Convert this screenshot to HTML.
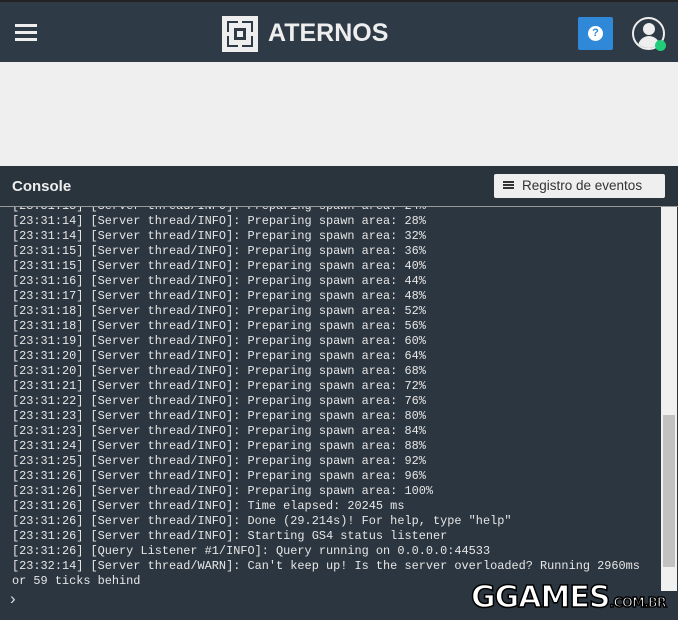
<!DOCTYPE html>
<html><head><style>
*{margin:0;padding:0;box-sizing:border-box}
body{width:678px;height:620px;overflow:hidden;background:#efefef;font-family:"Liberation Sans",sans-serif;position:relative}
.hdr{position:absolute;left:0;top:0;width:678px;height:62px;background:#2e3a45;border-top:2px solid #222}
.ham{position:absolute;left:15px;top:22px;width:22px}
.ham div{height:3px;background:#eee;margin-bottom:4px}
.logo{position:absolute;left:222px;top:14px;width:36px;height:36px;background:#eee}
.logo .i{position:absolute;left:5px;top:5px;width:26px;height:26px;border:2px solid #2e3a45}
.logo .g1{position:absolute;left:16px;top:5px;width:4px;height:26px;background:#eee}
.logo .g2{position:absolute;left:5px;top:16px;width:26px;height:4px;background:#eee}
.logo .c{position:absolute;left:12px;top:12px;width:12px;height:12px;background:#2e3a45}
.logo .c2{position:absolute;left:15px;top:15px;width:6px;height:6px;background:#eee}
.brand{position:absolute;left:268px;top:17px;font-size:25px;color:#eee;font-weight:bold}
.help{position:absolute;left:578px;top:15px;width:35px;height:33px;background:#2f88d8;border-radius:2px}
.help div{position:absolute;left:10px;top:9px;width:15px;height:15px;border-radius:50%;background:#fff;color:#2f88d8;font-size:11px;font-weight:bold;text-align:center;line-height:15px}
.av{position:absolute;left:632px;top:15px;width:33px;height:33px;border-radius:50%;border:2px solid #eee;overflow:hidden}
.av .h{position:absolute;left:9px;top:4px;width:12px;height:12px;border-radius:50%;background:#eee}
.av .b{position:absolute;left:4px;top:17px;width:22px;height:16px;border-radius:11px 11px 0 0;background:#eee}
.dot{position:absolute;left:655px;top:38px;width:11px;height:11px;border-radius:50%;background:#22cc7a}
.ch{position:absolute;left:0;top:166px;width:678px;height:40px;background:#2a343d}
.ch .t{position:absolute;left:12px;top:12px;color:#eee;font-weight:bold;font-size:15px}
.btn{position:absolute;left:494px;top:8px;width:171px;height:24px;background:#efefef;border-radius:2px;font-size:13.5px;color:#333;line-height:24px;padding-left:28px}
.btn i{position:absolute;left:9px;top:7px;width:11px;height:2px;background:#333;box-shadow:0 3px 0 #333,0 6px 0 #333}
.con{position:absolute;left:0;top:206px;width:678px;height:414px;background:#2c3640;border-top:1px solid #999;overflow:hidden}
pre{position:absolute;left:12px;top:-8px;font-family:"Liberation Mono",monospace;font-size:11.9px;line-height:15px;color:#e6e6e6}
.sb{position:absolute;left:661px;top:0;width:16px;height:384px;background:#f0f0f0}
.th{position:absolute;left:2px;top:208px;width:12px;height:152px;background:#c1c1c1}
.prompt{position:absolute;left:10px;top:382px;color:#ddd;font-size:17px}
.gg{position:absolute;left:471px;top:580px;font-size:30px;font-weight:900;color:#fff;-webkit-text-stroke:1.5px #000;font-family:"DejaVu Sans",sans-serif;letter-spacing:-1px;transform:scaleX(1.0);transform-origin:left;white-space:nowrap}
.gg span{font-size:13px;letter-spacing:-1px}
</style></head><body>
<div class="hdr">
<div class="ham"><div></div><div></div><div></div></div>
<div class="logo"><div class="i"></div><div class="g1"></div><div class="g2"></div><div class="c"></div><div class="c2"></div></div>
<div class="brand">ATERNOS</div>
<div class="help"><div>?</div></div>
<div class="av"><div class="h"></div><div class="b"></div></div><div class="dot"></div>
</div>
<div class="ch"><div class="t">Console</div><div class="btn"><i></i>Registro de eventos</div></div>
<div class="con">
<pre>[23:31:13] [Server thread/INFO]: Preparing spawn area: 24%
[23:31:14] [Server thread/INFO]: Preparing spawn area: 28%
[23:31:14] [Server thread/INFO]: Preparing spawn area: 32%
[23:31:15] [Server thread/INFO]: Preparing spawn area: 36%
[23:31:15] [Server thread/INFO]: Preparing spawn area: 40%
[23:31:16] [Server thread/INFO]: Preparing spawn area: 44%
[23:31:17] [Server thread/INFO]: Preparing spawn area: 48%
[23:31:18] [Server thread/INFO]: Preparing spawn area: 52%
[23:31:18] [Server thread/INFO]: Preparing spawn area: 56%
[23:31:19] [Server thread/INFO]: Preparing spawn area: 60%
[23:31:20] [Server thread/INFO]: Preparing spawn area: 64%
[23:31:20] [Server thread/INFO]: Preparing spawn area: 68%
[23:31:21] [Server thread/INFO]: Preparing spawn area: 72%
[23:31:22] [Server thread/INFO]: Preparing spawn area: 76%
[23:31:23] [Server thread/INFO]: Preparing spawn area: 80%
[23:31:23] [Server thread/INFO]: Preparing spawn area: 84%
[23:31:24] [Server thread/INFO]: Preparing spawn area: 88%
[23:31:25] [Server thread/INFO]: Preparing spawn area: 92%
[23:31:26] [Server thread/INFO]: Preparing spawn area: 96%
[23:31:26] [Server thread/INFO]: Preparing spawn area: 100%
[23:31:26] [Server thread/INFO]: Time elapsed: 20245 ms
[23:31:26] [Server thread/INFO]: Done (29.214s)! For help, type "help"
[23:31:26] [Server thread/INFO]: Starting GS4 status listener
[23:31:26] [Query Listener #1/INFO]: Query running on 0.0.0.0:44533
[23:32:14] [Server thread/WARN]: Can't keep up! Is the server overloaded? Running 2960ms
or 59 ticks behind</pre>
<div class="sb"><div class="th"></div></div>
<div class="prompt">›</div>
</div>
<div class="gg">GGAMES<span>.COM.BR</span></div>
</body></html>
